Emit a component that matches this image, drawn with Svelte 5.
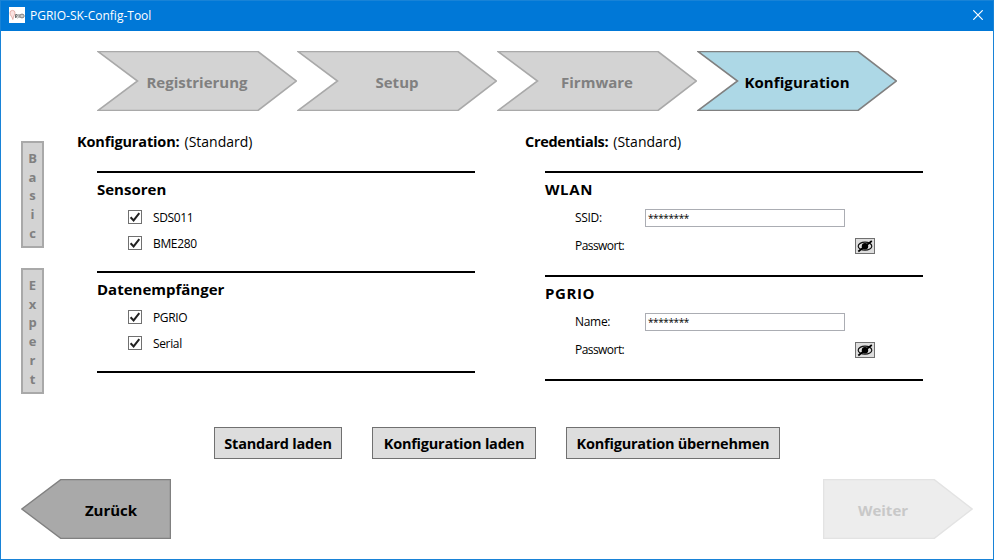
<script>
  const steps = [
    { label: 'Registrierung', active: false },
    { label: 'Setup', active: false },
    { label: 'Firmware', active: false },
    { label: 'Konfiguration', active: true }
  ];
  const tabs = ['Basic', 'Expert'];
  const groups = [
    { title: 'Sensoren', items: ['SDS011', 'BME280'] },
    { title: 'Datenempfänger', items: ['PGRIO', 'Serial'] }
  ];
  const accounts = [
    { title: 'WLAN', user: 'SSID:' },
    { title: 'PGRIO', user: 'Name:' }
  ];
  const actions = [
    { label: 'Standard laden', width: 128 },
    { label: 'Konfiguration laden', width: 164 },
    { label: 'Konfiguration übernehmen', width: 214 }
  ];
</script>

<div class="window">
  <header>
    <svg class="logo" width="16" height="16" viewBox="0 0 16 16">
      <rect width="16" height="16" fill="#fff" />
      <path d="M3.800 12.500C3.500 10 1 8.500 1 5.900A2.500 2.500 0 0 1 6 5.900C6 7.500 4.400 9 3.800 12.500Z" fill="#fbe3e1" stroke="#e6b0ac" />
      <path d="M6.500 11V7.500H8.200V9.300H6.700L8.500 11M10 7V11" fill="none" stroke="#666" stroke-width=".9" />
      <ellipse cx="13" cy="9" rx="2.200" ry="1.900" fill="#ccc" stroke="#777" stroke-width=".9" />
    </svg>
    <span class="caption">PGRIO-SK-Config-Tool</span>
    <svg class="close" width="10" height="10" viewBox="0 0 10 10"><path d="M.3.3 9.700 9.700M9.700.3.3 9.700" stroke="#fff" stroke-width="1.200" /></svg>
  </header>

  <nav>
    {#each steps as step}
      <div class="step" class:active={step.active}>
        <svg width="200" height="60" viewBox="0 0 200 60"><path d="M1 .5H161L199.500 30 161 59.500H1L40.500 30Z" /></svg>
        <span class="bold">{step.label}</span>
      </div>
    {/each}
  </nav>

  <main>
    <aside>
      {#each tabs as tab}
        <div class="tab">
          {#each tab.split('') as ch}<span>{ch}</span>{/each}
        </div>
      {/each}
    </aside>

    <section class="left">
      <h2><b>Konfiguration:</b><span>(Standard)</span></h2>
      {#each groups as group}
        <div class="group">
          <h3 class="bold">{group.title}</h3>
          {#each group.items as item}
            <div class="check">
              <svg width="14" height="14" viewBox="0 0 14 14">
                <rect x=".5" y=".5" width="13" height="13" fill="#fff" stroke="#707070" />
                <path d="M2.600 7.200 5.600 10.400 11.300 3.200" fill="none" stroke="#212121" stroke-width="2" />
              </svg>
              <span>{item}</span>
            </div>
          {/each}
        </div>
      {/each}
      <div class="rule"></div>
    </section>

    <section class="right">
      <h2><b>Credentials:</b><span>(Standard)</span></h2>
      {#each accounts as account}
        <div class="group">
          <h3 class="bold">{account.title}</h3>
          <div class="field">
            <span>{account.user}</span>
            <div class="input">********</div>
          </div>
          <div class="field">
            <span class="tight">Passwort:</span>
            <div class="eye">
              <svg width="18" height="14" viewBox="0 0 18 14">
                <ellipse cx="9" cy="7.200" rx="6.800" ry="4" fill="none" stroke="#111" stroke-width="1.200" />
                <circle cx="9" cy="7.200" r="3.200" fill="#000" />
                <path d="M2.300 12.500 15.800 2" stroke="#000" stroke-width="1.700" />
              </svg>
            </div>
          </div>
        </div>
      {/each}
      <div class="rule"></div>
    </section>
  </main>

  <div class="actions">
    {#each actions as action}
      <div class="button" style:width="{action.width}px">{action.label}</div>
    {/each}
  </div>

  <footer>
    <div class="arrow back">
      <svg width="150" height="60" viewBox="0 0 150 60"><path d="M149.500.5H40L.8 30 40 59.500H149.500Z" /></svg>
      <span class="bold">Zurück</span>
    </div>
    <div class="arrow next">
      <svg width="150" height="60" viewBox="0 0 150 60"><path d="M.5.5H111L149.200 30 111 59.500H.5Z" /></svg>
      <span class="bold">Weiter</span>
    </div>
  </footer>
</div>

<style>
  .window {
    box-sizing: border-box;
    width: 994px;
    height: 560px;
    border: 1px solid #1883d7;
    background: #fff;
    color: #000;
    font: 12px/16px 'Open Sans', 'Noto Sans', sans-serif;
    display: flex;
    flex-direction: column;
    overflow: hidden;
    white-space: nowrap;
  }
  .bold { font-weight: 700; font-size: 15px; }
  header {
    height: 30px;
    flex: none;
    box-sizing: border-box;
    padding: 0 10px 2px 8px;
    display: flex;
    align-items: center;
    background: #0078d7;
    color: #fff;
  }
  .caption { margin-left: 5px; flex: 1; padding-top: 2px; }
  nav { display: flex; margin: 20px 0 0 96px; height: 60px; flex: none; }
  .step, .arrow { display: grid; place-items: center; color: #808080; }
  .step { width: 200px; height: 60px; }
  .step svg, .arrow svg, .step span, .arrow span { grid-area: 1 / 1; }
  .step span { padding-top: 2px; }
  .step path { fill: #d3d3d3; stroke: #a9a9a9; stroke-width: 1.600; }
  .step.active { color: #000; }
  .step.active span { letter-spacing: 0.100px; }
  .step.active path { fill: #add8e6; stroke: #808080; }
  main { display: flex; height: 316px; flex: none; padding-left: 20px; }
  aside { width: 56px; padding-top: 30px; display: flex; flex-direction: column; gap: 20px; }
  .tab {
    width: 23px;
    box-sizing: border-box;
    border: 2px solid #a9a9a9;
    background: #d3d3d3;
    color: #808080;
    font-weight: 700;
    font-size: 13px;
    line-height: 18.700px;
    padding: 6px 0 3.500px;
    display: flex;
    flex-direction: column;
    align-items: center;
  }
  section { width: 398px; padding-top: 20px; }
  .right { margin-left: 50px; }
  h2 {
    display: flex;
    gap: 5px;
    margin: 0;
    height: 40px;
    line-height: 22px;
    font-size: 14px;
    font-weight: 400;
  }
  h2 b { font-size: 14.500px; letter-spacing: -0.150px; }
  .right h2 b { letter-spacing: -0.300px; }
  h3 { margin: 0; line-height: 22px; padding-top: 5px; height: 31px; box-sizing: border-box; }
  .group { height: 100px; box-sizing: border-box; margin-left: 20px; border-top: 2px solid #000; }
  .right .group { height: 104px; }
  .right h3 { letter-spacing: 0.600px; }
  .rule { height: 2px; margin-left: 20px; background: #000; }
  .check { display: flex; align-items: center; gap: 11px; height: 26px; padding-left: 31px; }
  .check span { letter-spacing: -0.350px; padding-top: 2px; }
  .field { display: flex; align-items: center; height: 28px; padding-left: 30px; }
  .field > span { width: 70px; letter-spacing: -0.300px; }
  .field > .tight { letter-spacing: -0.550px; }
  .input {
    width: 200px;
    height: 18px;
    box-sizing: border-box;
    border: 1px solid #abadb3;
    padding-left: 2px;
    font-size: 10px;
    line-height: 17px;
    letter-spacing: -0.400px;
  }
  .eye {
    margin-left: 210px;
    width: 20px;
    height: 16px;
    box-sizing: border-box;
    border: 1px solid #707070;
    background: #ddd;
  }
  .eye svg, .check svg, nav svg, footer svg { display: block; }
  .actions { display: flex; gap: 30px; margin-left: 213px; height: 32px; flex: none; }
  .button {
    box-sizing: border-box;
    border: 1px solid #707070;
    background: #ddd;
    text-align: center;
    font-size: 14.500px;
    font-weight: 700;
    letter-spacing: -0.220px;
    line-height: 31px;
  }
  footer { display: flex; justify-content: space-between; margin: 20px 20px 0; }
  .arrow span { padding-top: 1px; }
  .back { color: #000; }
  .back span { padding-left: 30px; }
  .next span { padding-right: 30px; }
  .back path { fill: #a9a9a9; stroke: #808080; stroke-width: 1.500; }
  .next { color: #c8c8c8; }
  .next path { fill: #ededed; stroke: #e3e3e3; stroke-width: 1.500; }
</style>
